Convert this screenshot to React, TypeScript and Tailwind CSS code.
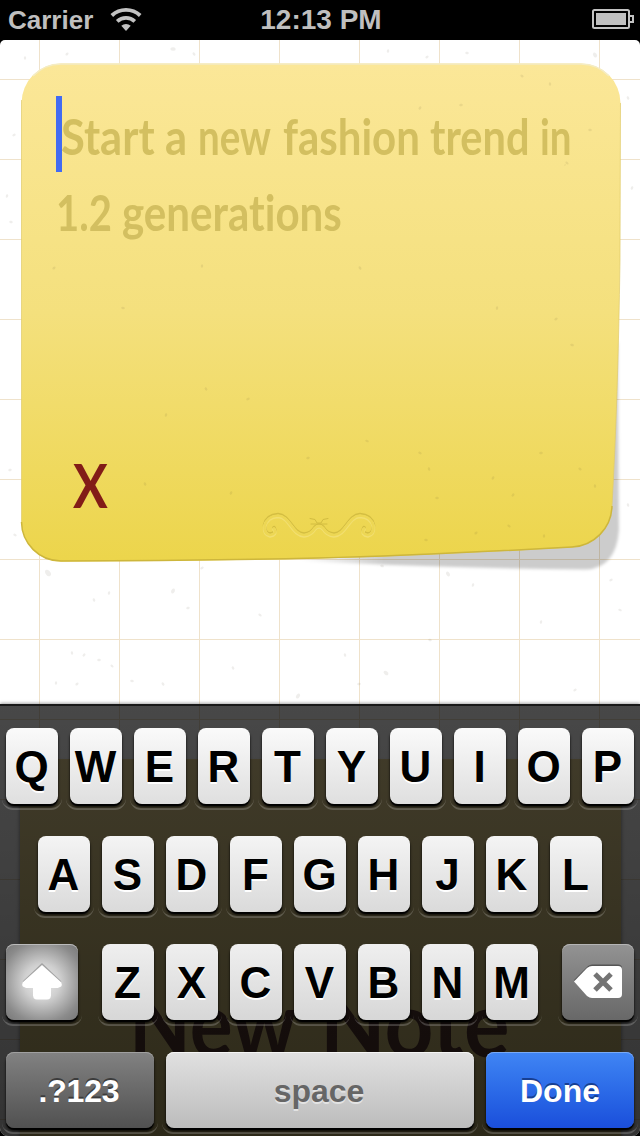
import type { ReactNode } from "react";

const specks: [number, number, number][] = [
  [25, 58, 2], [67, 54, 2], [173, 49, 3], [194, 54, 2], [388, 51, 2], [427, 57, 2], [467, 53, 2], [595, 55, 3],
  [7, 196, 2], [14, 135, 2], [11, 222, 2], [628, 98, 2], [632, 188, 2], [10, 470, 2], [15, 535, 2], [628, 505, 2],
  [420, 108, 2], [461, 105, 2], [522, 76, 2], [550, 84, 2], [565, 165, 1], [590, 130, 2], [567, 163, 2],
  [202, 266, 2], [54, 268, 2], [123, 308, 2], [360, 268, 2], [497, 308, 2], [556, 319, 2], [572, 345, 2],
  [206, 389, 2], [166, 415, 2], [248, 399, 2], [367, 441, 2], [145, 484, 2], [231, 493, 2], [308, 458, 2],
  [420, 453, 2], [429, 469, 2], [493, 478, 2], [541, 453, 2], [580, 469, 2], [595, 486, 2], [513, 495, 2],
  [437, 498, 2], [509, 526, 2], [544, 536, 2], [476, 533, 2], [426, 540, 2], [48, 573, 4], [109, 593, 2],
  [202, 568, 2], [382, 566, 2], [448, 574, 3], [473, 585, 2], [611, 580, 2], [620, 610, 2], [94, 600, 2],
  [173, 591, 3], [188, 608, 2], [260, 615, 2], [345, 655, 2], [298, 696, 3], [359, 684, 2], [386, 673, 3],
  [72, 653, 2], [84, 655, 2], [99, 660, 2], [112, 666, 2], [56, 683, 2], [77, 684, 2], [132, 681, 2], [163, 684, 2],
  [541, 622, 2], [575, 690, 2], [430, 640, 2], [233, 668, 2],
];

const flourish =
  "M274 528.500Q277 534 270 535Q264 534 264.500 526Q267 516 278 515.500C290 516 292 534.500 304 535Q311 534.500 315 528Q319 524 323 528Q327 534.500 334 535C346 534.500 348 516 360 515.500Q371 516 373.500 526Q374 534 368 535Q361 534 364 528.500";

function StatusBar() {
  return (
    <header className="flex h-10 items-center bg-black text-[#bfbfbf]">
      <div className="flex w-[240px] items-center pl-2">
        <span className="text-[26px] leading-10 font-bold">Carrier</span>
        <svg className="ml-[17px]" width="32" height="24" viewBox="0 0 32 24">
          <g fill="none" stroke="#c2c2c2" strokeWidth="3.8">
            <path d="M1.800 7.500A21 21 0 0 1 30.200 7.500" />
            <path d="M7.200 13.400A13 13 0 0 1 24.800 13.400" />
          </g>
          <path d="M11.300 17.800A7 7 0 0 1 20.700 17.800L16 23Z" fill="#c2c2c2" />
        </svg>
      </div>
      <span className="w-[162px] text-center text-[28px] leading-10 font-bold whitespace-nowrap">12:13 PM</span>
      <svg className="ml-auto mr-[5px]" width="43" height="22" viewBox="0 0 43 22">
        <rect x="1" y="1" width="36" height="18" rx="1.5" fill="none" stroke="#c2c2c2" strokeWidth="2" />
        <rect x="4" y="4" width="30" height="12" fill="#bfbfbf" />
        <path d="M38 7h3v6h-3" fill="none" stroke="#c2c2c2" strokeWidth="2" />
      </svg>
    </header>
  );
}

function Paper() {
  return (
    <svg className="pointer-events-none absolute inset-x-0 -top-10" width="640" height="704" viewBox="0 0 640 704">
      <defs>
        <linearGradient id="note" x1="0" y1="0" x2="0" y2="1">
          <stop offset="0" stopColor="#fbe798" />
          <stop offset="0.5" stopColor="#f4e07d" />
          <stop offset="1" stopColor="#ecd54b" />
        </linearGradient>
        <linearGradient id="fade" x1="300" y1="0" x2="420" y2="0" gradientUnits="userSpaceOnUse">
          <stop offset="0" stopColor="#000" stopOpacity="0" />
          <stop offset="0.7" stopColor="#000" stopOpacity="0.2" />
        </linearGradient>
        <filter id="soft">
          <feGaussianBlur stdDeviation="1.8" />
        </filter>
      </defs>
      <path
        d="M260 545L600 420L618 340Q618 430 619 530Q616 568 586 569.500Q430 568 260 559Z"
        fill="url(#fade)"
        filter="url(#soft)"
      />
      <path
        d="M61 63.500H581A39.500 39.500 0 0 1 620.500 103L620 260Q618 400 612 506A42 42 0 0 1 572 547.500Q420 556 318 558.500Q190 561.500 61 561.500A39.500 39.500 0 0 1 21.500 522V103A39.500 39.500 0 0 1 61 63.500Z"
        fill="url(#note)"
      />
      <path d="M33 76A39 39 0 0 1 61 64H581A39 39 0 0 1 609 76" fill="none" stroke="#f4ecc4" strokeWidth="1.500" />
      <path d="M21.500 100V522M620.500 103L620 260Q618 400 612 506" fill="none" stroke="#dfcb6a" strokeWidth="1" opacity=".7" />
      <path
        d="M612 506A42 42 0 0 1 572 547Q420 555.500 318 558Q190 561 61 561A39.500 39.500 0 0 1 21.500 522"
        fill="none"
        stroke="#cdb63c"
        strokeWidth="1.500"
      />
      {specks.map(([x, y, r], i) => (
        <ellipse key={i} cx={x} cy={y} rx={r * 0.6} ry={r * 0.9} fill="#4b4530" opacity=".09" transform={`rotate(${(i * 47) % 180} ${x} ${y})`} />
      ))}
      <g fill="none" strokeLinecap="round" strokeWidth="3.500">
        <path d={flourish} transform="translate(0 -.9)" stroke="#d4be42" />
        <path d={flourish} transform="translate(0 .9)" stroke="#f2df70" />
        <path d={flourish} stroke="#edd754" strokeWidth="2.600" />
        <path d="M310 518.500L315 519.500L317 523H321L323 519.500L328 518.500M311 524H327" stroke="#d2bc40" strokeWidth="1" />
      </g>
    </svg>
  );
}

function Word({ box, scale, children }: { box: string; scale: string; children: ReactNode }) {
  return (
    <span className={`block shrink-0 whitespace-nowrap ${box}`}>
      <span className={`inline-block origin-left ${scale}`}>{children}</span>
    </span>
  );
}

function NoteEditor() {
  return (
    <section className="relative h-[522px] pt-14 pl-14 font-['Lato',sans-serif] font-bold text-[#d3bf60] [font-variant-ligatures:none]">
      <div className="flex h-[76px] text-[50px] leading-[81px]">
        <span className="w-1.5 shrink-0 bg-[#426bf2]" />
        <Word box="w-[104px] -ml-[1px]" scale="scale-x-[0.87]">Start</Word>
        <Word box="w-[33px]" scale="scale-x-[0.87]">a</Word>
        <Word box="w-[85px]" scale="scale-x-[0.77]">new</Word>
        <Word box="w-[147px]" scale="scale-x-[0.84]">fashion</Word>
        <Word box="w-[110px]" scale="scale-x-[0.83]">trend</Word>
        <Word box="w-[36px]" scale="scale-x-[0.77]">in</Word>
      </div>
      <div className="flex h-[76px] text-[50px] leading-[81px]">
        <Word box="w-[66px]" scale="scale-x-[0.8]">1.2</Word>
        <Word box="w-[240px]" scale="scale-x-[0.842]">generations</Word>
      </div>
      <button className="mt-[199px] ml-[17px] block h-[76px] w-[36px] text-[61px] leading-[74px] font-bold text-[#821c17]">
        <span className="inline-block origin-left scale-x-[0.85]">X</span>
      </button>
    </section>
  );
}

function NextNote() {
  return (
    <section className="mt-[197px] ml-5 h-[377px] w-[601px] border-t border-[#efdc9c] bg-linear-to-b from-[#ebd796] to-[#e0cd7c] shadow-[0_3px_4px_rgba(0,0,0,0.5)]">
      <div className="flex pt-[216px] pl-[109px] font-['Lato',sans-serif] text-[92px] leading-[92px] font-bold text-[#5c3c34]">
        <Word box="w-[191px]" scale="scale-x-[0.873]">New</Word>
        <Word box="w-[190px]" scale="scale-x-[0.927]">Note</Word>
      </div>
    </section>
  );
}

const light = "text-[44px] text-black [text-shadow:0_2px_0_#fff]";

function Key({ width, face, children }: { width: string; face: string; children: ReactNode }) {
  return (
    <button className={`relative block h-[76px] shrink-0 ${width}`}>
      <span className="absolute -inset-x-[4px] -bottom-[6px] h-[14px] rounded-b-[11px] border-b-2 border-white/20" />
      <span
        className={`relative flex h-[76px] items-center justify-center rounded-[8px] leading-[76px] font-bold shadow-[0_2px_1px_#000,0_3px_3px_rgba(0,0,0,0.7)] ${face}`}
      >
        {children}
      </span>
    </button>
  );
}

function Letters({ letters, face }: { letters: string; face: string }) {
  return (
    <>
      {letters.split("").map((letter) => (
        <Key key={letter} width="w-[52px]" face={`${light} ${face}`}>
          <span className="relative top-px -left-[0.5px]">{letter}</span>
        </Key>
      ))}
    </>
  );
}

function Keyboard() {
  return (
    <div className="absolute inset-x-0 bottom-0 flex h-[432px] flex-col gap-8 border-t-2 border-[#191919] bg-linear-to-b from-black/72 to-black/80 px-1.5 pt-[22px] shadow-[0_-1px_3px_rgba(0,0,0,0.35)]">
      <div className="flex gap-3">
        <Letters letters="QWERTYUIOP" face="bg-linear-to-b from-[#fafafa] to-[#dfdfdf]" />
      </div>
      <div className="flex gap-3 pl-8">
        <Letters letters="ASDFGHJKL" face="bg-linear-to-b from-[#f4f4f4] to-[#dadada]" />
      </div>
      <div className="flex justify-between">
        <Key
          width="w-[72px]"
          face="bg-[radial-gradient(circle_at_50%_50%,#ededed_0,#cfcfcf_35%,#8b8b8b_78%,#777_100%)] inset-shadow-[0_1px_0_#bbb]"
        >
          <svg width="44" height="40" viewBox="0 0 44 40">
            <path d="M22 1L41 19Q43 25 38 26H31V33Q31 37 27 37H17Q13 37 13 33V26H6Q1 25 3 19Z" fill="#888" opacity=".65" />
            <path d="M22 3L41.500 20.500Q43 25 38 26H31V33.500Q31 37.500 27 37.500H17Q13 37.500 13 33.500V26H6Q1 25 2.500 20.500Z" fill="#fff" />
          </svg>
        </Key>
        <div className="flex gap-3">
          <Letters letters="ZXCVBNM" face="bg-linear-to-b from-[#efefef] to-[#d7d7d7]" />
        </div>
        <Key width="w-[72px]" face="bg-linear-to-b from-[#939393] to-[#686868] inset-shadow-[0_1px_0_#b5b5b5]">
          <svg width="50" height="36" viewBox="0 0 50 36">
            <path d="M1 16L15 2Q17 0.500 19 0.500H45Q49 0.500 49 4V28H12Z" fill="#555" />
            <path d="M1 17.500L14 4Q16.500 2 19 2H45Q49 2 49 6V30Q49 34 45 34H19Q16.500 34 14 32Z" fill="#fff" />
            <path d="M22 10L38 26M38 10L22 26" stroke="#747474" strokeWidth="5" />
          </svg>
        </Key>
      </div>
      <div className="flex gap-3 text-[32px]">
        <Key
          width="w-[148px]"
          face="bg-linear-to-b from-[#828282] to-[#515151] text-white inset-shadow-[0_1px_0_#a0a0a0] [text-shadow:0_-2px_0_#3c3c3c]"
        >
          <span className="relative top-px -left-px tracking-[-0.2px]">.?123</span>
        </Key>
        <Key
          width="w-[308px]"
          face="bg-linear-to-b from-[#e1e1e1] to-[#bcbcbc] text-[#666] inset-shadow-[0_1px_0_#f5f5f5] [text-shadow:0_2px_0_#e3e3e3]"
        >
          <span className="relative top-px -ml-[2px]">space</span>
        </Key>
        <Key
          width="w-[148px]"
          face="bg-linear-to-b from-[#4085f4] to-[#1b4edb] text-white inset-shadow-[0_1px_0_#79aaf6] [text-shadow:0_-2px_0_#173e91]"
        >
          <span className="relative top-px">Done</span>
        </Key>
      </div>
    </div>
  );
}

export default function App() {
  return (
    <div className="relative flex h-[1136px] w-[640px] flex-col overflow-hidden bg-black font-['Liberation_Sans',Arial,sans-serif]">
      <StatusBar />
      <main className="relative h-[1096px] overflow-hidden rounded-t-[5px] rounded-b-[8px] bg-white bg-[size:80px_80px] [background-image:linear-gradient(to_right,transparent_39px,#efe2cb_39px,#efe2cb_40px,transparent_40px),linear-gradient(to_bottom,transparent_39px,#efe2cb_39px,#efe2cb_40px,transparent_40px)]">
        <Paper />
        <NoteEditor />
        <NextNote />
        <Keyboard />
      </main>
    </div>
  );
}
